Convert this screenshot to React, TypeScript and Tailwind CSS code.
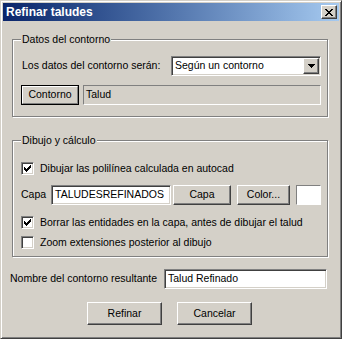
import React from 'react';

const CHECK = ['......X', '.....XX', 'X...XXX', 'XX.XXX.', 'XXXXX..', '.XXX...', '..X....'];
const CLOSE_X = ['XX....XX', '.XX..XX.', '..XXXX..', '...XX...', '..XXXX..', '.XX..XX.', 'XX....XX'];
const ARROW = ['XXXXXXX', '.XXXXX.', '..XXX..', '...X...'];

const Pix = ({ rows }: { rows: string[] }) => (
  <svg width={rows[0].length} height={rows.length} shapeRendering="crispEdges" className="block">
    {rows.flatMap((r, y) =>
      r.split('').map((c, x) => (c === 'X' ? <rect key={`${x}-${y}`} x={x} y={y} width={1} height={1} fill="#000" /> : null))
    )}
  </svg>
);

const raised = 'bg-[#d4d0c8] border border-t-white border-l-white border-r-[#404040] border-b-[#404040] shadow-[inset_-1px_-1px_#808080]';
const sunken = 'bg-white border border-t-[#808080] border-l-[#808080] border-r-white border-b-white shadow-[inset_1px_1px_#404040,inset_-1px_-1px_#d4d0c8]';
const etched = 'relative border border-[#808080] shadow-[1px_1px_0_#fff,inset_1px_1px_0_#fff]';

const Check = ({ checked, label }: { checked?: boolean; label: string }) => (
  <div className="flex items-center h-[13px]">
    <div className={`w-[13px] h-[13px] flex items-center justify-center ${sunken}`}>
      {checked && <Pix rows={CHECK} />}
    </div>
    <span className="ml-[6px] leading-[13px] whitespace-nowrap">{label}</span>
  </div>
);

const Frame = ({ title, className, children }: { title: string; className: string; children: React.ReactNode }) => (
  <div className={`${etched} ${className}`}>
    <span className="absolute left-[8px] -top-[7px] px-[1px] bg-[#d4d0c8] leading-[13px]">{title}</span>
    {children}
  </div>
);

export default function App() {
  return (
    <div className="w-[342px] h-[339px] bg-[#d4d0c8] border border-t-[#d4d0c8] border-l-[#d4d0c8] border-r-[#404040] border-b-[#404040] shadow-[inset_1px_1px_#fff,inset_-1px_-1px_#808080] p-[2px] text-[10.5px] text-black font-['Liberation_Sans',Arial,sans-serif] select-none">
      {/* title bar */}
      <div className="h-[18px] flex items-center justify-between bg-linear-to-r from-[#0a246a] to-[#a6caf0] pl-[3px] pr-[2px]">
        <span className="text-white font-bold text-[12px] leading-[18px]">Refinar taludes</span>
        <button className={`w-[16px] h-[14px] flex items-center justify-center ${raised}`}>
          <Pix rows={CLOSE_X} />
        </button>
      </div>

      <div className="pl-[9px]">
        <Frame title="Datos del contorno" className="mt-[18px] w-[316px] h-[78px]">
          <div className="pt-[16px] pl-[8px]">
            <div className="flex items-center h-[20px]">
              <span className="w-[150px] pl-[1px] whitespace-nowrap">Los datos del contorno serán:</span>
              <div className={`w-[150px] h-[20px] flex items-center justify-between pl-[3px] pr-[1px] ${sunken}`}>
                <span>Según un contorno</span>
                <div className={`w-[16px] h-[16px] flex items-center justify-center ${raised}`}>
                  <Pix rows={ARROW} />
                </div>
              </div>
            </div>
            <div className="flex mt-[9px] h-[20px]">
              <div className="w-[58px] h-[20px] border border-black">
                <div className="w-full h-full flex items-center justify-center border border-t-white border-l-white border-r-[#808080] border-b-[#808080]">
                  Contorno
                </div>
              </div>
              <div className="ml-[4px] w-[238px] h-[20px] flex items-center pl-[2px] border border-t-[#808080] border-l-[#808080] border-r-white border-b-white">
                Talud
              </div>
            </div>
          </div>
        </Frame>

        <Frame title="Dibujo y cálculo" className="mt-[23px] w-[316px] h-[117px]">
          <div className="pt-[21px] pl-[8px]">
            <Check checked label="Dibujar las polilínea calculada en autocad" />
            <div className="flex items-center mt-[10px] h-[20px]">
              <span className="w-[30px]">Capa</span>
              <div className={`w-[120px] h-[20px] flex items-center pl-[3px] ${sunken}`}>TALUDESREFINADOS</div>
              <button className={`ml-[2px] w-[58px] h-[20px] ${raised}`}>Capa</button>
              <button className={`ml-[6px] w-[53px] h-[20px] ${raised}`}>Color...</button>
              <div className="ml-[6px] w-[25px] h-[20px] bg-white border border-t-[#808080] border-l-[#808080] border-r-white border-b-white" />
            </div>
            <div className="mt-[11px]">
              <Check checked label="Borrar las entidades en la capa, antes de dibujar el talud" />
            </div>
            <div className="mt-[7px]">
              <Check label="Zoom extensiones posterior al dibujo" />
            </div>
          </div>
        </Frame>
      </div>

      <div className="flex items-center mt-[12px] pl-[7px] h-[20px]">
        <span className="w-[154px] whitespace-nowrap">Nombre del contorno resultante</span>
        <div className={`w-[163px] h-[20px] flex items-center pl-[3px] ${sunken}`}>Talud Refinado</div>
      </div>

      <div className="flex mt-[13px] pl-[84px] gap-[15px]">
        <button className={`w-[75px] h-[23px] ${raised}`}>Refinar</button>
        <button className={`w-[75px] h-[23px] ${raised}`}>Cancelar</button>
      </div>
    </div>
  );
}
